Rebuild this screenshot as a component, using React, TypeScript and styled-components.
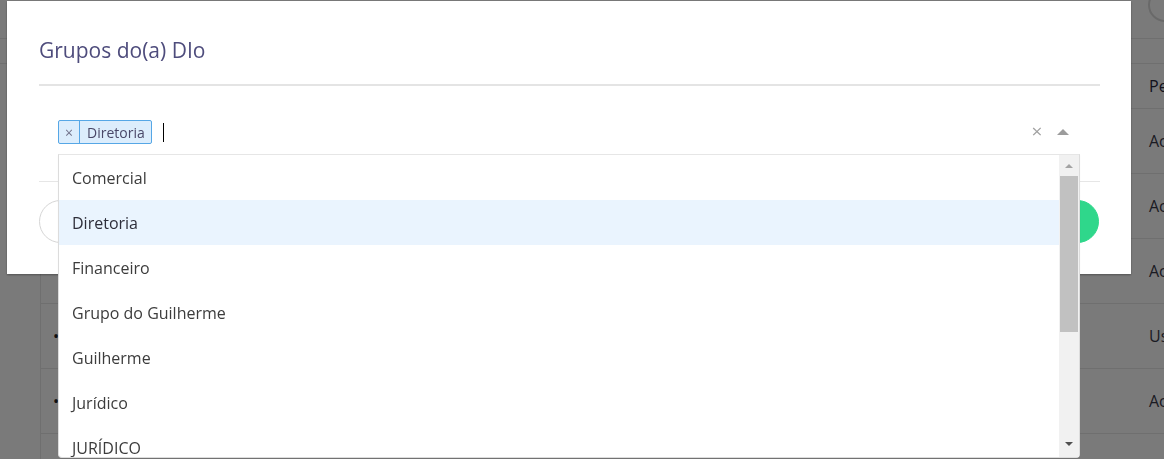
import React from "react";
import styled, { createGlobalStyle } from "styled-components";

const Global = createGlobalStyle`
  html, body {
    margin: 0;
    padding: 0;
    width: 1164px;
    height: 459px;
    overflow: hidden;
    background: #fff;
    font-family: "Open Sans", "Liberation Sans", sans-serif;
  }
  * { box-sizing: border-box; }
`;

/* ---------- page behind the modal ---------- */
const Page = styled.div`
  width: 1164px;
  height: 459px;
  overflow: hidden;
  background: #fff;
`;

const TopBar = styled.div`
  height: 39px;
  border-bottom: 1px solid #e9e9e9;
  display: flex;
  justify-content: flex-end;
  align-items: flex-start;
`;

const Avatar = styled.div`
  width: 34px;
  height: 34px;
  margin-top: -12px;
  margin-right: -18px;
  border-radius: 50%;
  border: 2px solid #dcdcdc;
`;

const SubBar = styled.div`
  height: 25px;
  border-bottom: 1px solid #e9e9e9;
`;

const Table = styled.div`
  margin-left: 40px;
  border-left: 1px solid #e9e9e9;
`;

const Row = styled.div<{ $h: number }>`
  display: grid;
  grid-template-columns: 1108px 200px;
  height: ${(p) => p.$h}px;
  border-bottom: 1px solid #e9e9e9;
  align-items: center;
`;

const Handle = styled.span`
  padding-left: 12px;
  font-size: 16px;
  color: #222;
`;

const Cell = styled.span<{ $head?: boolean }>`
  font-size: 16px;
  color: ${(p) => (p.$head ? "#26263e" : "#3a3a4a")};
  white-space: nowrap;
`;

const Overlay = styled.div`
  position: fixed;
  inset: 0;
  background: rgba(0, 0, 0, 0.52);
`;

/* ---------- modal ---------- */
const Modal = styled.div`
  position: fixed;
  left: 7px;
  top: 1px;
  width: 1124px;
  background: #fff;
  padding: 0 31px 0 32px;
  box-shadow: 0 1px 2px rgba(0, 0, 0, 0.35);
`;

const ModalHeader = styled.div`
  padding: 35px 0 20px;
  border-bottom: 2px solid #e4e4e4;
`;

const Title = styled.h2`
  margin: 0;
  font-size: 21px;
  line-height: 28px;
  font-weight: 400;
  color: #4e4c7c;
`;

const ModalBody = styled.div`
  position: relative;
  padding: 28px 20px 31px 19px;
`;

const Control = styled.div`
  display: flex;
  align-items: center;
  height: 36px;
`;

const Tag = styled.div`
  display: inline-flex;
  align-items: stretch;
  height: 24px;
  border: 1px solid #56a7e6;
  border-radius: 2px;
  background: #dcedfc;
`;

const TagRemove = styled.span`
  width: 21px;
  display: flex;
  align-items: center;
  justify-content: center;
  border-right: 1px solid #56a7e6;
  font-size: 14px;
  color: #72728a;
`;

const TagLabel = styled.span`
  display: flex;
  align-items: center;
  padding: 0 6px 0 7px;
  font-size: 14px;
  color: #4a4868;
`;

const Caret = styled.span`
  width: 1px;
  height: 19px;
  margin-left: 11px;
  background: #000;
`;

const Spacer = styled.div`
  flex: 1;
`;

const Clear = styled.span`
  width: 18px;
  text-align: center;
  font-size: 19px;
  line-height: 1;
  color: #a2a2a2;
  margin-top: -2px;
`;

const ArrowZone = styled.span`
  width: 34px;
  display: flex;
  justify-content: center;
  padding-bottom: 1px;
`;

const ArrowUp = styled.span`
  width: 0;
  height: 0;
  border-left: 6px solid transparent;
  border-right: 6px solid transparent;
  border-bottom: 6px solid #9c9c9c;
`;

const Menu = styled.div`
  position: absolute;
  top: 68px;
  left: 19px;
  right: 20px;
  height: 304px;
  display: flex;
  background: #fff;
  border: 1px solid #dcdcdc;
  border-top-color: #e6e6e6;
  border-radius: 0 0 4px 4px;
  box-shadow: 0 1px 1px rgba(0, 0, 0, 0.08);
  z-index: 2;
`;

const Options = styled.div`
  flex: 1;
  overflow: hidden;
`;

const Option = styled.div<{ $focused?: boolean }>`
  height: 45px;
  display: flex;
  align-items: center;
  padding-left: 13px;
  font-size: 16px;
  color: ${(p) => (p.$focused ? "#2e2e3a" : "#3c3c3c")};
  background: ${(p) => (p.$focused ? "#eaf4fe" : "transparent")};
`;

const Scrollbar = styled.div`
  width: 20px;
  background: #f1f1f1;
  display: flex;
  flex-direction: column;
  padding-bottom: 2px;
`;

const ScrollBtn = styled.div<{ $down?: boolean }>`
  height: ${(p) => (p.$down ? 22 : 21)}px;
  display: flex;
  align-items: center;
  justify-content: center;
  &::after {
    content: "";
    width: 0;
    height: 0;
    border-left: 4.5px solid transparent;
    border-right: 4.5px solid transparent;
    ${(p) =>
      p.$down
        ? "border-top: 4.5px solid #505050;"
        : "border-bottom: 4.5px solid #a3a3a3;"}
  }
`;

const Thumb = styled.div`
  height: 156px;
  margin: 0 1px;
  background: #c1c1c1;
`;

const ModalFooter = styled.div`
  border-top: 1px solid #e6e6e6;
  padding: 18px 1px 31px 0;
  display: flex;
  justify-content: space-between;
`;

const Button = styled.button<{ $primary?: boolean }>`
  height: 43px;
  width: 150px;
  border-radius: 22px;
  font-family: inherit;
  font-size: 15px;
  border: 1px solid ${(p) => (p.$primary ? "#2fd78b" : "#d6d6d6")};
  background: ${(p) => (p.$primary ? "#2fd78b" : "#fff")};
  color: ${(p) => (p.$primary ? "#fff" : "#555")};
`;

const options = [
  "Comercial",
  "Diretoria",
  "Financeiro",
  "Grupo do Guilherme",
  "Guilherme",
  "Jurídico",
  "JURÍDICO",
];

const rows = ["Acesso total", "Acesso total", "Acesso total", "Usuário", "Acesso total", "Acesso total"];

export default function App() {
  return (
    <>
      <Global />
      <Page>
        <TopBar>
          <Avatar />
        </TopBar>
        <SubBar />
        <Table>
          <Row $h={45}>
            <span />
            <Cell $head>Perfil</Cell>
          </Row>
          {rows.map((r, i) => (
            <Row key={i} $h={65}>
              <Handle>•</Handle>
              <Cell>{r}</Cell>
            </Row>
          ))}
        </Table>
      </Page>
      <Overlay />
      <Modal>
        <ModalHeader>
          <Title>Grupos do(a) DIo</Title>
        </ModalHeader>
        <ModalBody>
          <Control>
            <Tag>
              <TagRemove>×</TagRemove>
              <TagLabel>Diretoria</TagLabel>
            </Tag>
            <Caret />
            <Spacer />
            <Clear>×</Clear>
            <ArrowZone>
              <ArrowUp />
            </ArrowZone>
          </Control>
          <Menu>
            <Options>
              {options.map((o) => (
                <Option key={o} $focused={o === "Diretoria"}>
                  {o}
                </Option>
              ))}
            </Options>
            <Scrollbar>
              <ScrollBtn />
              <Thumb />
              <Spacer />
              <ScrollBtn $down />
            </Scrollbar>
          </Menu>
        </ModalBody>
        <ModalFooter>
          <Button>Cancelar</Button>
          <Button $primary>Salvar</Button>
        </ModalFooter>
      </Modal>
    </>
  );
}
